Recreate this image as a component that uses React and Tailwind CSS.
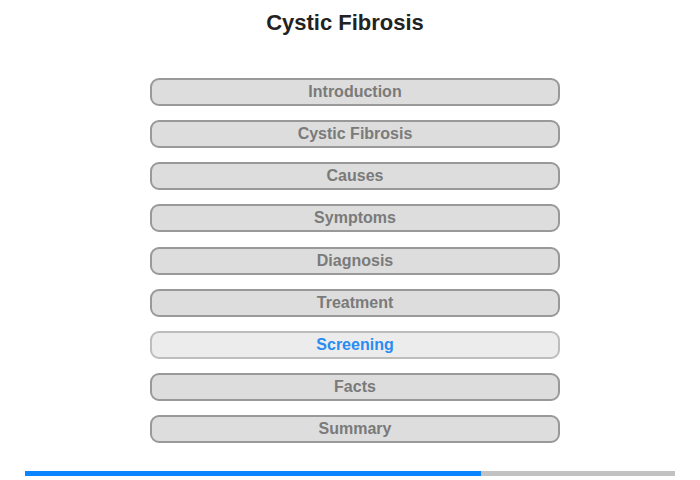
export default function App() {
  const items = ["Introduction","Cystic Fibrosis","Causes","Symptoms","Diagnosis","Treatment","Screening","Facts","Summary"];
  return (
    <div className="w-[700px] h-[480px] bg-white flex flex-col" style={{fontFamily:'"Liberation Sans", Arial, sans-serif'}}>
      <h1 className="text-[22px] font-bold text-[#222] text-center leading-[26px] mt-[10px] pr-[10px]">Cystic Fibrosis</h1>
      <div className="flex flex-col gap-[14.125px] ml-[150px] mt-[42px] w-[410px]">
        {items.map((t) => {
          const sel = t === "Screening";
          return (
            <div key={t} className={sel
              ? "h-[28px] rounded-[9px] border-2 border-[#bdbdbd] bg-[#ececec] text-[#2a8cf0] flex items-center justify-center text-[16px] font-bold"
              : "h-[28px] rounded-[9px] border-2 border-[#999] bg-[#dddddd] text-[#7a7a7a] flex items-center justify-center text-[16px] font-bold"}>
              {t}
            </div>
          );
        })}
      </div>
      <div className="ml-[25px] mt-[28px] w-[650px] h-[5px] bg-[#c2c2c2] flex">
        <div className="w-[456px] h-full bg-[#0a84ff]" />
      </div>
    </div>
  );
}
